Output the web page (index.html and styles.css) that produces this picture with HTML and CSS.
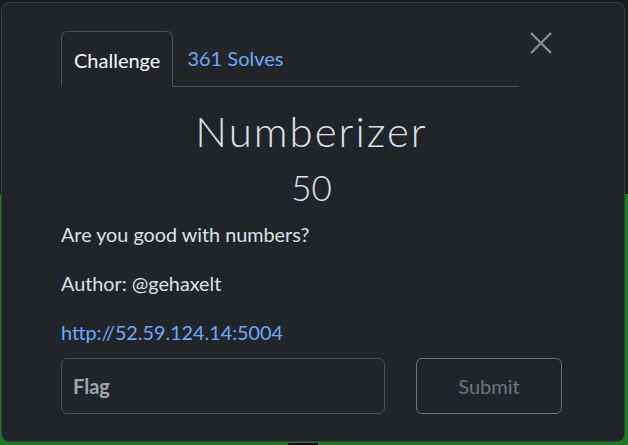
FILE: index.html
```html
<!DOCTYPE html>
<html>
<head>
<meta charset="utf-8">
<link rel="stylesheet" href="styles.css">
</head>
<body>
<div class="modal">
  <button class="close" aria-label="Close">
    <svg width="22" height="22" viewBox="0 0 22 22"><path d="M1 1L21 21M21 1L1 21" stroke="#8c8f93" stroke-width="2.2" fill="none"/></svg>
  </button>
  <div class="tabs">
    <div class="tab active">Challenge</div>
    <div class="tab link">361 Solves</div>
  </div>
  <h1 class="title">Numberizer</h1>
  <div class="value">50</div>
  <div class="desc">
    <p>Are you good with numbers?</p>
    <p>Author: @gehaxelt</p>
    <p><a href="#">http://52.59.124.14:5004</a></p>
  </div>
  <div class="form">
    <div class="input">Flag</div>
    <div class="submit">Submit</div>
  </div>
</div>
</body>
</html>
```

FILE: styles.css
```css
html, body {
  margin: 0;
  padding: 0;
  height: 445px;
  overflow: hidden;
}
body {
  background:
    linear-gradient(#0f0f10, #0f0f10) 288px 443px / 30px 2px no-repeat,
    linear-gradient(#1a1d20 0, #1a1d20 194px, #1e7a1e 194px, #1e7a1e 100%);
  font-family: Lato, "Open Sans", sans-serif;
  padding: 2px 3px 3px 1px;
  box-sizing: border-box;
}
.modal {
  position: relative;
  box-sizing: border-box;
  height: 440px;
  background: #212529;
  border: 1px solid #3a3e43;
  border-radius: 8px;
  padding: 28px 62px 0 59px;
  color: #dee2e6;
}
.close {
  position: absolute;
  top: 29px;
  right: 72px;
  background: none;
  border: 0;
  padding: 0;
  width: 22px;
  height: 22px;
  display: block;
}
.close svg { display: block; }
.tabs {
  display: flex;
  width: 458px;
  border-bottom: 1px solid #4c5156;
  height: 55px;
}
.tab {
  font-size: 20px;
  padding: 0 12px;
  line-height: 55px;
  box-sizing: border-box;
  height: 56px;
}
.tab.active {
  color: #f8f9fa;
  border: 1px solid #4c5156;
  border-bottom-color: #212529;
  border-radius: 6px 6px 0 0;
  line-height: 56px;
}
.tab.link {
  color: #6ea8fe;
  padding-left: 14px;
}
.title {
  margin: 20px 0 0;
  text-align: center;
  font-weight: 300;
  font-size: 42px;
  line-height: 48px;
  letter-spacing: 2px;
  color: #dee2e6;
}
.value {
  text-align: center;
  font-size: 35px;
  font-weight: 300;
  line-height: 44px;
  margin-top: 10px;
  color: #dee2e6;
}
.desc {
  margin-top: 12px;
  font-size: 19.8px;
  line-height: 26px;
}
.desc p {
  margin: 0 0 23px;
}
.desc a {
  color: #6ea8fe;
  text-decoration: none;
}
.form {
  display: flex;
  gap: 31px;
  margin-top: -10px;
  width: 501px;
}
.input {
  box-sizing: border-box;
  width: 324px;
  height: 56px;
  border: 1px solid #4b5055;
  border-radius: 6px;
  padding: 0 11px;
  line-height: 54px;
  font-size: 20px;
  font-weight: 700;
  color: #a3a7ab;
}
.submit {
  box-sizing: border-box;
  width: 146px;
  height: 56px;
  border: 1px solid #6c7177;
  border-radius: 6px;
  line-height: 54px;
  text-align: center;
  font-size: 20px;
  color: #6f757b;
}
```
